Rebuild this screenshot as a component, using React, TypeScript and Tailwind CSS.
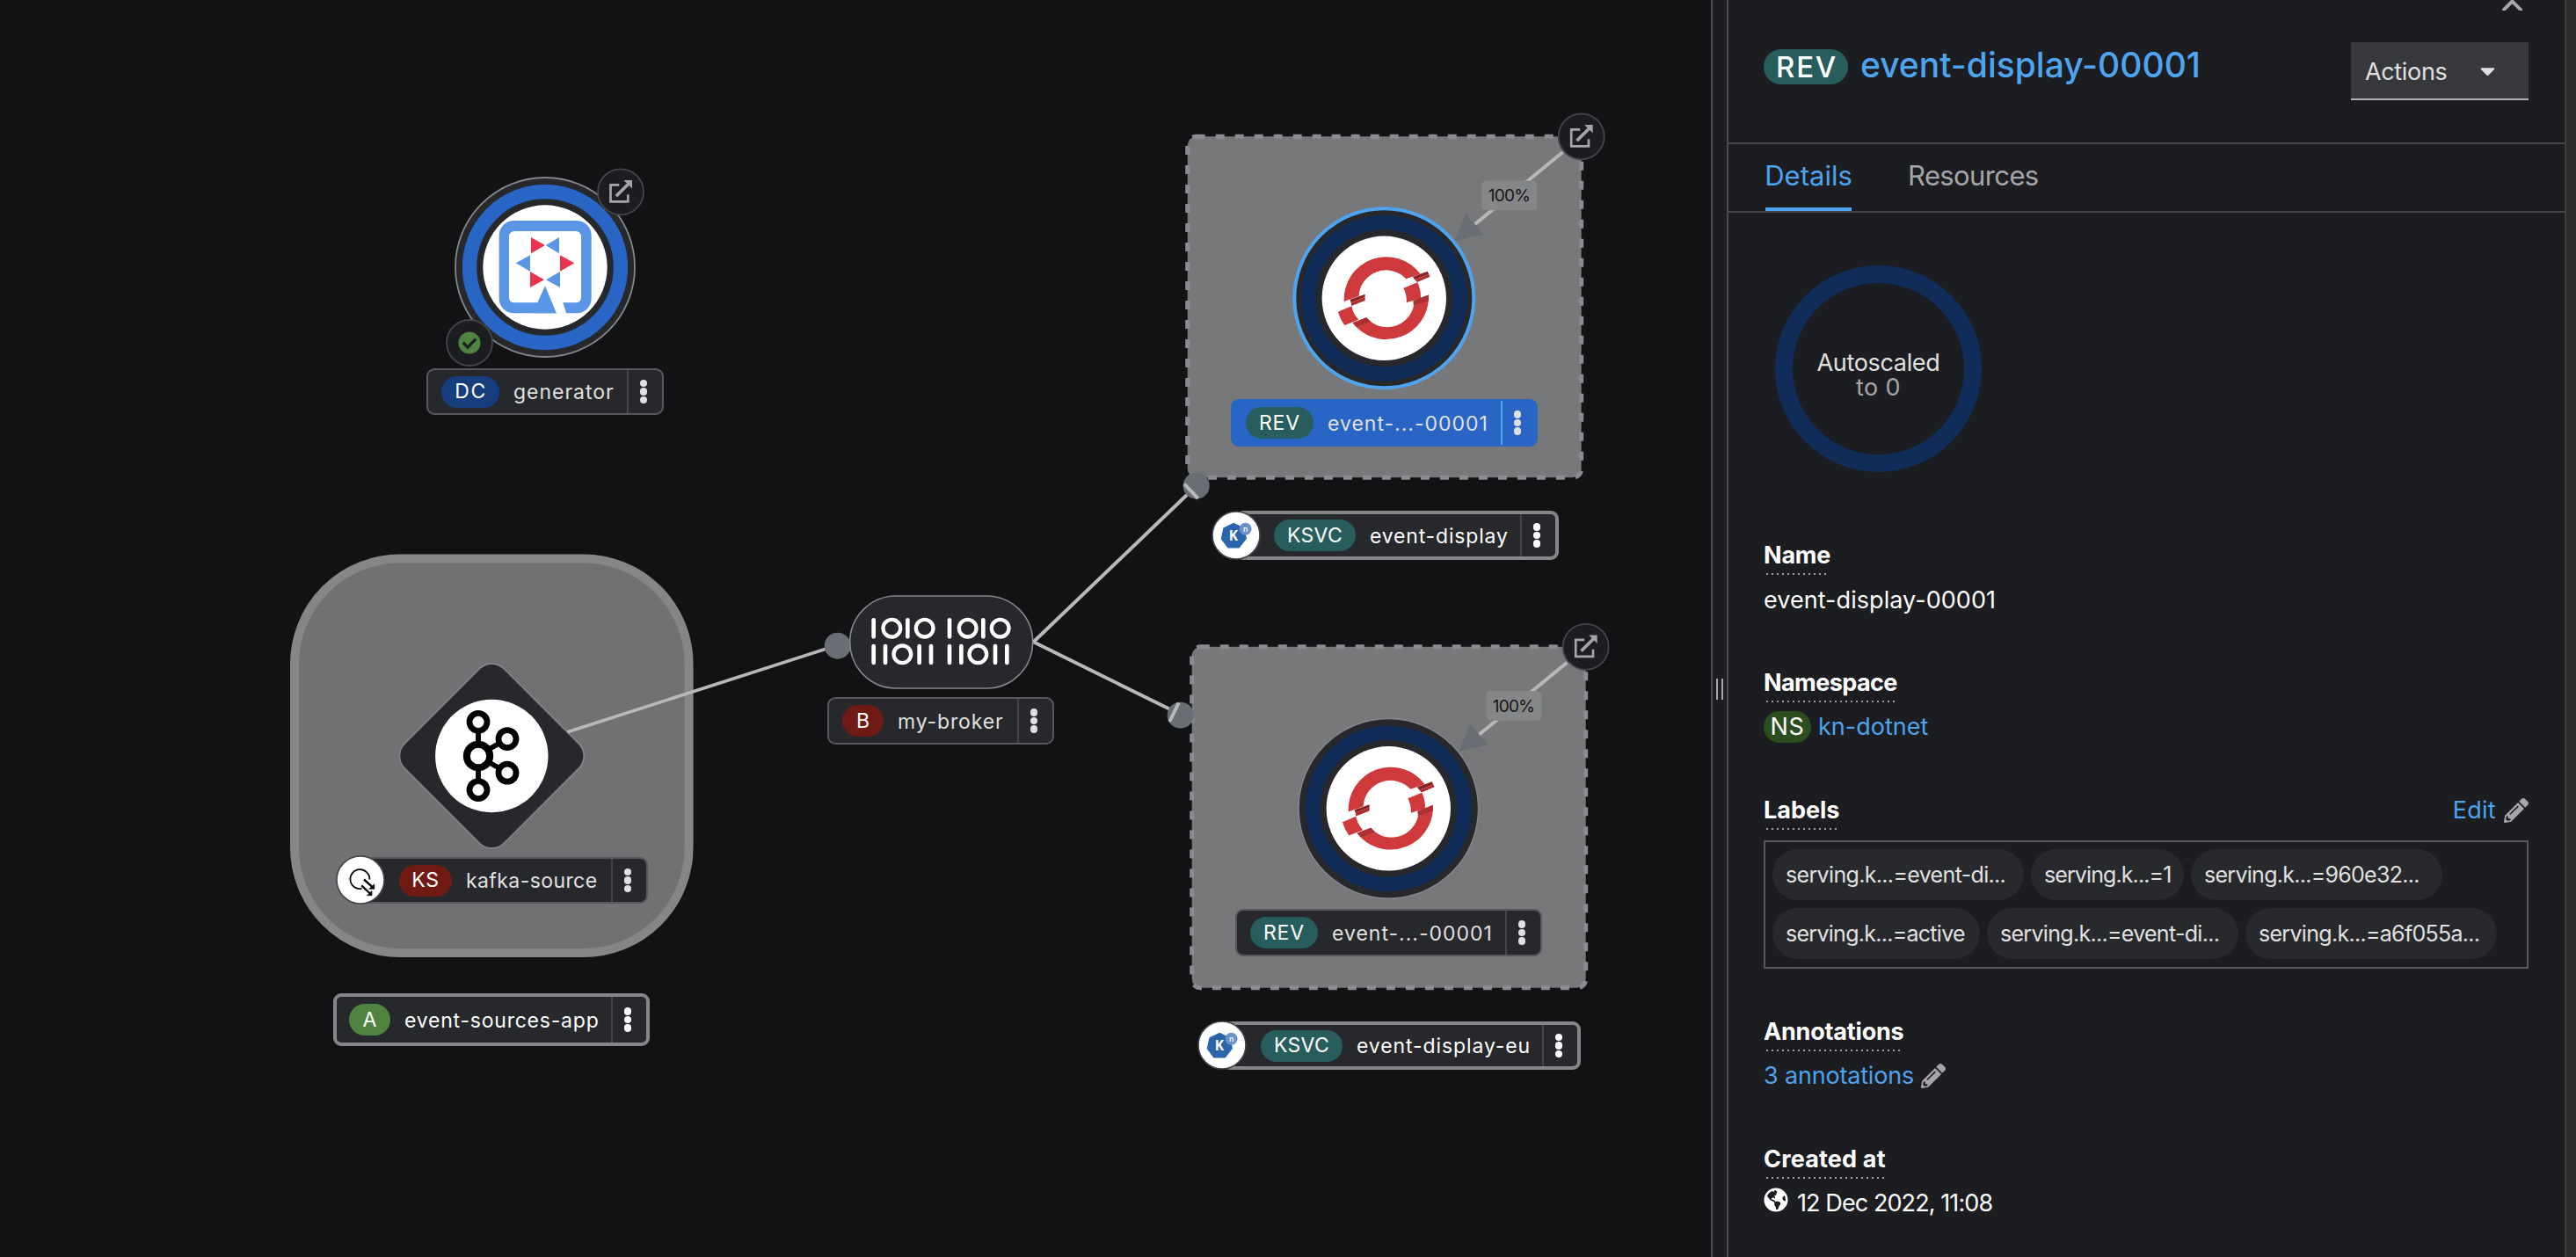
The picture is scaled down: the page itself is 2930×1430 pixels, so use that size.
import React from 'react';
import { FaCheckCircle, FaGlobeAmericas, FaPencilAlt, FaCaretDown } from 'react-icons/fa';

function Kebab({ line, tone }: { line: string; tone: string }) {
  return (
    <div className={`ml-auto flex w-10 shrink-0 flex-col items-center justify-center gap-[1px] self-stretch border-l-2 pr-1 ${line} ${tone}`}>
      <i className="size-[8.5px] rounded-full bg-current" />
      <i className="size-[8.5px] rounded-full bg-current" />
      <i className="size-[8.5px] rounded-full bg-current" />
    </div>
  );
}

type LabelProps = {
  box: string;
  pill: string;
  kind: string;
  name: string;
  nameClass: string;
  line?: string;
  tone?: string;
};

function Label({ box, pill, kind, name, nameClass, line = 'border-[#444548]', tone = 'text-[#e0e0e0]' }: LabelProps) {
  return (
    <div className={`absolute flex items-center rounded-[9px] text-[23px] leading-none ${box}`}>
      <span className={`flex h-9 shrink-0 items-center justify-center rounded-full text-white ${pill}`}>{kind}</span>
      <span className={`ml-4 pt-[2px] whitespace-nowrap ${nameClass} ${tone}`}>{name}</span>
      <Kebab line={line} tone={tone} />
    </div>
  );
}

function OpenDecorator({ x, y }: { x: number; y: number }) {
  return (
    <g transform={`translate(${x} ${y})`}>
      <circle r="26" fill="#1b1d21" stroke="#444548" strokeWidth="1.8" />
      <path d="M-1.6 -8 H-11.5 V11.1 H8.3 V3" fill="none" stroke="#a5a6a8" strokeWidth="2.7" />
      <path d="M-5.2 4.8 L8.5 -8.8" stroke="#a5a6a8" strokeWidth="3.6" />
      <path d="M3.4 -13.3 H13 V-3.7 Z" fill="#a5a6a8" />
    </g>
  );
}

function SyncLogo() {
  return (
    <g transform="scale(.33333) translate(-733 -598)">
      <path d="M596 609 A145 145 0 0 1 857 515 L808 532 A93 93 0 0 0 647 590 Z" fill="#ce393b" />
      <path d="M640 698 A145 145 0 0 0 885 600 L834 624 A93 93 0 0 1 685 676 Z" fill="#ce393b" />
      <path d="M576 644 L622 625 Q627 652 646 671 L598 690 Q583 669 576 644 Z" fill="#ce393b" />
      <path d="M799 563 L847 544 Q859 569 858 597 L810 613 Q811 586 799 563 Z" fill="#ce393b" />
      <path d="M617 602 L668 584 V594 L620 613 Z M831 525 L881 506 L886 516 L838 535 Z" fill="#872325" />
      <path d="M620 613 L668 594 V606 L622 624 Z M838 535 L886 516 L890 524 L846 543 Z M832 606 L885 586 V605 L834 624 Z M625 682 L673 663 L687 677 L640 698 Z" fill="#ac3031" />
    </g>
  );
}

function Revision({ x, y, selected }: { x: number; y: number; selected?: boolean }) {
  return (
    <g transform={`translate(${x} ${y})`}>
      <rect x="-223.6" y="-184" width="448" height="388" rx="10" fill="#77787a" stroke="#8b8c8f" strokeWidth="5" strokeDasharray="10 12" />
      <path d="M203 -166 L103 -84" stroke="#b8b8ba" strokeWidth="4" />
      <path d="M80 -65 L93.5 -96.6 L112.7 -72.6 Z" fill="#6a6d73" />
      <rect x="111" y="-133.7" width="63" height="33.6" rx="5" fill="#858688" />
      <circle r={selected ? 102 : 102.3} fill="#26282c" stroke={selected ? '#4ea4ee' : '#858688'} strokeWidth={selected ? 4 : 1.5} />
      <circle r="86.2" fill="none" stroke="#102d59" strokeWidth="16.3" />
      <circle r="70.7" fill="#fff" />
      <SyncLogo />
      <OpenDecorator x={224.4} y={-184} />
    </g>
  );
}

function KnativeBadge({ x, y }: { x: number; y: number }) {
  return (
    <svg className="absolute" style={{ left: x - 29, top: y - 29 }} width="58" height="58" viewBox="-29 -29 58 58">
      <circle r="27" fill="#fff" stroke="#444548" strokeWidth="1.6" />
      <path d="M-2.8 -14.2 L9.2 -8.6 L12 3.8 L3.6 14.4 L-9.5 14.4 L-17.3 4 L-14.6 -8.4 Z" fill="#2a65ab" />
      <text x="-3" y="6.3" textAnchor="middle" fontFamily="Open Sans" fontWeight="700" fontSize="15.5" fill="#fff">K</text>
      <circle cx="10.6" cy="-7.2" r="7" fill="#6b92c6" />
      <text x="10.6" y="-4.2" textAnchor="middle" fontFamily="Open Sans" fontWeight="600" fontSize="8.5" fill="#fff">n</text>
    </svg>
  );
}

const ONES = ['221 549', '337 549', '480 549', '595 549', '221 638', '261 638', '377 638', '417 638', '480 638', '520 638', '636 638', '676 638'];
const ZEROS = [[283, 584], [395, 584], [542, 584], [653, 584], [319, 673], [577, 673]];

function Topology() {
  return (
    <div className="relative h-full w-[1946px] shrink-0 overflow-hidden bg-[#111214]">
      <svg className="absolute inset-0" width="1946" height="1430" viewBox="0 0 1946 1430">
        {/* generator deployment */}
        <circle cx="620" cy="304" r="102" fill="#26282c" stroke="#858688" strokeWidth="1.8" />
        <circle cx="620" cy="304" r="86" fill="none" stroke="#2865c5" strokeWidth="16.3" />
        <circle cx="620" cy="304" r="70.7" fill="#fff" />
        <g transform="translate(460 180) scale(.33333)">
          <rect x="323" y="213" width="315" height="316" rx="50" fill="#5a95e6" />
          <rect x="357" y="249" width="246" height="244" rx="17" fill="#fff" />
          <path d="M480 436 L519 529 H440 L453 494 Z" fill="#5a95e6" />
          <path d="M503 490 L519 530 H553 L540 490 Z" fill="#fff" />
          <path d="M432 270 L480 297 L432 325 Z M580 358 L531 331 V386 Z M429 387 L477 415 L429 441 Z" fill="#ea344f" />
          <path d="M528 270 L482 297 L528 325 Z M380 358 L429 331 V386 Z M531 387 L483 415 L531 441 Z" fill="#5a95e6" />
        </g>
        <OpenDecorator x={706} y={218.3} />
        <circle cx="534" cy="390" r="26" fill="#1b1d21" stroke="#444548" strokeWidth="1.8" />

        {/* application group */}
        <rect x="335" y="635.5" width="448.6" height="448.6" rx="120" fill="#707173" stroke="#858688" strokeWidth="10" />
        <rect x="479.3" y="780" width="160" height="160" rx="20" transform="rotate(45 559.3 860)" fill="#26282c" stroke="#858688" strokeWidth="1.6" />
        <circle cx="559.3" cy="860" r="64.2" fill="#fff" />
        <g fill="none" stroke="#000">
          <path d="M544 831 V889 M553 854 L569 845 M553 865.500 L569 874.500" strokeWidth="5.8" />
          <circle cx="544" cy="860" r="13.2" fill="#fff" strokeWidth="8" />
          <circle cx="544" cy="821.3" r="10" strokeWidth="6.8" />
          <circle cx="544" cy="898.6" r="10" strokeWidth="6.8" />
          <circle cx="577" cy="840.6" r="10" strokeWidth="6.8" />
          <circle cx="577" cy="879.2" r="10" strokeWidth="6.8" />
        </g>

        {/* broker */}
        <path d="M645.500 832.700 L940 738" stroke="#b8b8ba" strokeWidth="3.6" />
        <circle cx="952.7" cy="734.7" r="15" fill="#6a6d73" />
        <rect x="966.7" y="678" width="208" height="105" rx="52.500" fill="#26282c" stroke="#858688" strokeWidth="1.6" />
        <g transform="translate(920 520) scale(.33333)" fill="none" stroke="#fff" strokeLinecap="round">
          {ONES.map((p) => (
            <path key={p} d={`M${p} m0 7 v57`} strokeWidth="14" />
          ))}
          {ZEROS.map(([x, y]) => (
            <circle key={`${x}-${y}`} cx={x} cy={y} r="29.500" strokeWidth="13" />
          ))}
        </g>

        <Revision x={1574.3} y={339.3} selected />
        <Revision x={1579.3} y={919.8} />

        {/* event links */}
        <path d="M1175.500 730.300 L1350 563 M1175.500 730.300 L1330 806.500" stroke="#b8b8ba" strokeWidth="4" fill="none" />
        <circle cx="1360.7" cy="552.7" r="15" fill="#6a6d73" />
        <path d="M1347 550.700 L1362.700 567" stroke="#b8b8ba" strokeWidth="4" />
        <circle cx="1342.7" cy="813.7" r="15" fill="#6a6d73" />
        <path d="M1340.700 799.500 L1330.300 821" stroke="#b8b8ba" strokeWidth="4" />
      </svg>

      <FaCheckCircle className="absolute top-[377px] left-[521px] size-[26px] text-[#4f8440]" />

      <span className="absolute top-[205px] left-[1685px] flex h-[34px] w-[63px] items-center justify-center text-[19px] leading-none tracking-[-0.67px] text-[#151515]">100%</span>
      <span className="absolute top-[786px] left-[1690px] flex h-[34px] w-[63px] items-center justify-center text-[19px] leading-none tracking-[-0.67px] text-[#151515]">100%</span>

      <Label box="left-[485px] top-[419px] h-[53px] w-[270px] border-2 border-[#57585b] bg-[#26282c]" pill="ml-[15px] w-[66px] bg-[#163d7c] tracking-[1.5px] pl-[1px]" kind="DC" name="generator" nameClass="tracking-[0.98px]" />
      <Label box="left-[410px] top-[975px] h-[53px] w-[327px] border-2 border-[#57585b] bg-[#26282c]" pill="ml-[42px] w-[60px] bg-[#6f1b13] tracking-[0.7px]" kind="KS" name="kafka-source" nameClass="tracking-[0.41px]" />
      <Label box="left-[379px] top-[1130px] h-[60px] w-[360px] border-4 border-[#858688] bg-[#26282c]" pill="ml-[14px] w-[47px] bg-[#4f8440]" kind="A" name="event-sources-app" nameClass="tracking-[0.78px]" tone="text-white" />
      <Label box="left-[941px] top-[793px] h-[54px] w-[258px] border-2 border-[#57585b] bg-[#26282c]" pill="ml-[15px] w-[47px] bg-[#6f1b13]" kind="B" name="my-broker" nameClass="tracking-[0.87px]" />
      <Label box="left-[1400px] top-[454px] h-[54px] w-[349px] border-2 border-[#2865c5] bg-[#2865c5]" pill="ml-[15px] w-[77px] bg-[#275d5d] tracking-[0.9px]" kind="REV" name="event-...-00001" nameClass="tracking-[1px]" line="border-[#4ea4ee]" />
      <Label box="left-[1405px] top-[1034px] h-[54px] w-[349px] border-2 border-[#57585b] bg-[#26282c]" pill="ml-[15px] w-[77px] bg-[#275d5d] tracking-[0.9px]" kind="REV" name="event-...-00001" nameClass="tracking-[1px]" />
      <Label box="left-[1405px] top-[581px] h-[56px] w-[368px] border-4 border-[#858688] bg-[#26282c]" pill="ml-[40px] w-[93px] bg-[#275d5d] tracking-[0.3px]" kind="KSVC" name="event-display" nameClass="tracking-[0.82px]" tone="text-white" />
      <Label box="left-[1390px] top-[1162px] h-[55px] w-[408px] border-4 border-[#858688] bg-[#26282c]" pill="ml-[40px] w-[93px] bg-[#275d5d] tracking-[0.3px]" kind="KSVC" name="event-display-eu" nameClass="tracking-[0.9px]" tone="text-white" />

      <KnativeBadge x={1405.7} y={609} />
      <KnativeBadge x={1390} y={1189.3} />
      <svg className="absolute top-[972px] left-[381px]" width="58" height="58" viewBox="-29 -29 58 58">
        <circle r="27" fill="#fff" stroke="#444548" strokeWidth="1.6" />
        <path d="M10.400 -0.500 A11 11 0 1 0 1.500 10" fill="none" stroke="#000" strokeWidth="1.8" />
        <path d="M4 -0.500 L13 7.700 M1.200 6.300 L10.400 15" stroke="#000" strokeWidth="2.4" />
        <path d="M15.800 4.800 V10.300 H9.800 Z M13 12.500 V17.700 H7.500 Z" fill="#000" stroke="#000" strokeWidth="0.6" />
      </svg>
    </div>
  );
}

function Term({ children, className }: { children: React.ReactNode; className: string }) {
  return (
    <dt className={`h-[42px] w-fit pt-[1px] text-[27px] leading-10 font-bold text-white ${className}`}>
      {children}
      <div className="mr-[2px] ml-[3px] h-[2px] bg-[repeating-linear-gradient(90deg,#a0a0a3_0_2px,transparent_2px_6px)]" />
    </dt>
  );
}

const CHIPS = [
  { text: 'serving.k...=event-di...', className: 'w-[286px] tracking-[-0.66px]' },
  { text: 'serving.k...=1', className: 'w-[174px] tracking-[-0.9px]' },
  { text: 'serving.k...=960e32...', className: 'w-[286px] tracking-[-0.72px]' },
  { text: 'serving.k...=active', className: 'w-[236px] tracking-[-0.72px]' },
  { text: 'serving.k...=event-di...', className: 'w-[286px] tracking-[-0.7px]' },
  { text: 'serving.k...=a6f055a...', className: 'w-[286px] tracking-[-0.7px]' },
];

function SidePanel() {
  return (
    <aside className="flex w-[951px] shrink-0 flex-col bg-[#1c1d21]">
      <header className="flex h-[164px] shrink-0 flex-col border-b-2 border-[#444548] pr-[41px] pl-10">
        <div className="flex h-3 justify-end pr-[7px]">
          <svg width="23" height="12" viewBox="0 0 23 12" fill="none" stroke="#a5a6a8" strokeWidth="4">
            <path d="M0.500 12.500 L13 0 M22.500 12.500 L10 0" />
          </svg>
        </div>
        <div className="mt-9 flex items-start justify-between">
          <h1 className="mt-2 flex h-10 items-center leading-none font-medium">
            <span className="flex h-10 w-24 items-center justify-center rounded-full bg-[#275d5d] pl-[2px] text-[33px] tracking-[1.8px] text-white">REV</span>
            <span className="ml-[14px] pb-[5px] text-[39px] text-[#4ea4ee]">event-display-00001</span>
          </h1>
          <button className="flex h-[66px] w-[202px] items-center border-b-2 border-[#b0b1b3] bg-[#37383b] pl-4 text-[27px] leading-none tracking-[-0.34px] text-[#e0e0e0]">
            <span className="pt-[2px]">Actions</span>
            <FaCaretDown className="ml-[33px] size-[27px]" />
          </button>
        </div>
      </header>

      <nav className="flex h-[78px] shrink-0 border-b-2 border-[#444548] pl-[42px] text-[31px] leading-none">
        <a className="flex h-[76px] w-[98px] items-center justify-center border-b-4 border-[#4ea4ee] pb-[2px] text-[#4ea4ee]">Details</a>
        <a className="ml-[64px] flex h-[70px] items-center tracking-[-0.62px] text-[#a5a6a8]">Resources</a>
      </nav>

      <div className="mt-[60px] ml-[53px] flex size-[235px] shrink-0 flex-col items-center justify-center rounded-full border-[20px] border-[#102d59] pt-[15px] text-[27px] leading-[28px]">
        <span className="tracking-[-0.34px] text-[#e0e0e0]">Autoscaled</span>
        <span className="tracking-[0.45px] text-[#a5a6a8]">to 0</span>
      </div>

      <dl className="mt-[74px] pr-[41px] pl-10 text-[27px] leading-10 text-white">
        <Term className="tracking-[-0.2px]">Name</Term>
        <dd className="mt-[10px] h-10 tracking-[0.05px]">event-display-00001</dd>

        <div className="h-[53px]" />
        <Term className="tracking-[-0.58px]">Namespace</Term>
        <dd className="mt-[9px] flex items-center">
          <span className="flex h-9 w-[54px] items-center justify-center rounded-full bg-[#2b4e1f] tracking-[0.6px]">NS</span>
          <span className="ml-2 text-[#4ea4ee]">kn-dotnet</span>
        </dd>

        <div className="h-[54px]" />
        <div className="flex justify-between">
          <Term className="">Labels</Term>
          <a className="flex h-10 items-center pt-[1px] tracking-[0.3px] text-[#4ea4ee]">
            Edit
            <FaPencilAlt className="ml-[9px] size-7 text-[#a5a6a8]" />
          </a>
        </div>
        <dd className="mt-[13px] flex h-[146px] flex-wrap content-start gap-x-2 gap-y-[9px] border-2 border-[#57585b] pt-2 pl-2">
          {CHIPS.map((c, i) => (
            <span key={i} className={`flex h-[58px] items-center rounded-full bg-[#27292d] pl-[15px] text-[25px] whitespace-nowrap text-[#e0e0e0] ${c.className}`}>
              {c.text}
            </span>
          ))}
        </dd>

        <div className="h-[51px]" />
        <Term className="tracking-[-0.2px]">Annotations</Term>
        <dd className="mt-[9px] flex items-center tracking-[-0.18px] text-[#4ea4ee]">
          3 annotations
          <FaPencilAlt className="ml-2 size-7 text-[#a5a6a8]" />
        </dd>

        <div className="h-[54px]" />
        <Term className="tracking-[0.17px]">Created at</Term>
        <dd className="mt-[9px] flex items-center tracking-[-0.91px]">
          <FaGlobeAmericas className="mb-2 size-7" />
          <span className="ml-[10px]">12 Dec 2022, 11:08</span>
        </dd>
      </dl>
    </aside>
  );
}

export default function App() {
  return (
    <div className="flex h-[1430px] w-[2930px] overflow-hidden bg-[#111214] font-['Inter',sans-serif]">
      <Topology />
      <div className="flex w-5 shrink-0 justify-center gap-1 border-x-2 border-[#4a4b4e] bg-[#1c1d21] pt-[772px]">
        <i className="h-6 w-[2px] bg-[#a5a6a8]" />
        <i className="h-6 w-[2px] bg-[#a5a6a8]" />
      </div>
      <SidePanel />
      <div className="w-[13px] shrink-0 border-l-2 border-[#3d3e3f] bg-[#2b2c2b]" />
    </div>
  );
}
